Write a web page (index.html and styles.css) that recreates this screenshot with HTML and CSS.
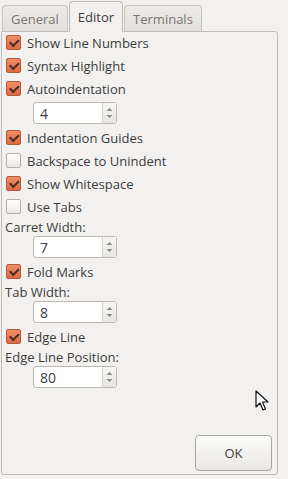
FILE: index.html
```html
<!DOCTYPE html>
<html lang="en">
<head>
    <meta charset="UTF-8">
    <title>Preferences</title>
    <link rel="stylesheet" href="styles.css">
</head>
<body>
<div class="window">
    <div class="tabs">
        <div class="tab">General</div>
        <div class="tab active">Editor</div>
        <div class="tab">Terminals</div>
    </div>
    <div class="panel">
        <div class="options">
            <label class="check on"><span class="box"></span>Show Line Numbers</label>
            <label class="check on"><span class="box"></span>Syntax Highlight</label>
            <label class="check on"><span class="box"></span>Autoindentation</label>
            <div class="spin first"><span class="value">4</span><span class="arrows"><svg width="7" height="14" viewBox="0 0 7 14"><path d="M0.5 5 L3.5 2 L6.5 5 Z M0.5 9 L3.5 12 L6.5 9 Z" fill="#8d8a85"/></svg></span></div>
            <label class="check on"><span class="box"></span>Indentation Guides</label>
            <label class="check"><span class="box"></span>Backspace to Unindent</label>
            <label class="check on"><span class="box"></span>Show Whitespace</label>
            <label class="check"><span class="box"></span>Use Tabs</label>
            <div class="label">Carret Width:</div>
            <div class="spin"><span class="value">7</span><span class="arrows"><svg width="7" height="14" viewBox="0 0 7 14"><path d="M0.5 5 L3.5 2 L6.5 5 Z M0.5 9 L3.5 12 L6.5 9 Z" fill="#8d8a85"/></svg></span></div>
            <label class="check on"><span class="box"></span>Fold Marks</label>
            <div class="label">Tab Width:</div>
            <div class="spin"><span class="value">8</span><span class="arrows"><svg width="7" height="14" viewBox="0 0 7 14"><path d="M0.5 5 L3.5 2 L6.5 5 Z M0.5 9 L3.5 12 L6.5 9 Z" fill="#8d8a85"/></svg></span></div>
            <label class="check on"><span class="box"></span>Edge Line</label>
            <div class="label">Edge Line Position:</div>
            <div class="spin"><span class="value">80</span><span class="arrows"><svg width="7" height="14" viewBox="0 0 7 14"><path d="M0.5 5 L3.5 2 L6.5 5 Z M0.5 9 L3.5 12 L6.5 9 Z" fill="#8d8a85"/></svg></span></div>
        </div>
        <div class="footer">
            <button class="ok">OK</button>
        </div>
    </div>
    <svg class="cursor" width="14" height="22" viewBox="0 0 14 22">
        <path d="M1 1 L1 17 L5 13 L8 20 L10.5 19 L7.5 12 L13 12 Z" fill="#fff" stroke="#111" stroke-width="1.2" stroke-linejoin="round"/>
    </svg>
</div>
</body>
</html>
```
FILE: styles.css
```css
body {
    margin: 0;
    background: #f2f1f0;
    font-family: "Open Sans", "DejaVu Sans", sans-serif;
    font-size: 13px;
    color: #3c3c3c;
}
.window {
    position: relative;
    width: 288px;
    height: 479px;
    display: flex;
    flex-direction: column;
}
.tabs {
    display: flex;
    align-items: flex-end;
    height: 31px;
    padding-left: 2px;
    gap: 1px;
}
.tab {
    height: 25px;
    padding: 0 8px;
    line-height: 26px;
    color: #7a7772;
    background: linear-gradient(#edebe8, #e2dfdb);
    border: 1px solid #c9c5c0;
    border-bottom: none;
    border-radius: 4px 4px 0 0;
}
.tab.active {
    height: 30px;
    line-height: 30px;
    color: #3c3c3c;
    background: #f2f1f0;
    border-color: #c0bcb6;
    position: relative;
    top: 1px;
    z-index: 1;
}
.panel {
    flex: 1;
    display: flex;
    flex-direction: column;
    margin: 0 10px 4px 1px;
    border: 1px solid #c0bcb6;
    border-radius: 0 3px 3px 3px;
}
.options {
    display: flex;
    flex-direction: column;
    margin-top: -1px;
    padding-left: 3px;
}
.check {
    display: flex;
    align-items: center;
    height: 23px;
    gap: 6px;
    flex-shrink: 0;
}
.box {
    width: 13px;
    height: 13px;
    margin-left: 1px;
    border: 1px solid #b3aea8;
    border-radius: 2px;
    background: linear-gradient(#ffffff, #ebe9e6);
    position: relative;
}
.check.on .box {
    border-color: #b4593a;
    background: linear-gradient(#ef8d68, #dd6a45);
}
.check.on .box::after {
    content: "";
    position: absolute;
    left: 2px;
    top: 7px;
    width: 7px;
    height: 4px;
    border-left: 2px solid #4a2c22;
    border-bottom: 2px solid #4a2c22;
    transform: rotate(-45deg);
    transform-origin: 0 0;
}
.label {
    height: 18px;
    line-height: 18px;
    flex-shrink: 0;
}
.spin {
    display: flex;
    flex-shrink: 0;
    width: 84px;
    height: 22px;
    margin: 0 0 2px 28px;
    border: 1px solid #bcb8b2;
    border-radius: 3px;
    background: #fff;
    box-sizing: border-box;
}
.spin.first {
    margin-top: 2px;
}
.value {
    flex: 1;
    padding-left: 6px;
    line-height: 21px;
    font-size: 14px;
}
.arrows {
    width: 13px;
    display: flex;
    align-items: center;
    justify-content: center;
    border-left: 1px solid #d6d3cf;
    background: linear-gradient(#f6f5f4, #e8e6e3);
}
.footer {
    margin-top: auto;
    display: flex;
    justify-content: flex-end;
    padding: 0 5px 3px 0;
}
.ok {
    width: 77px;
    height: 36px;
    border: 1px solid #aaa6a0;
    border-radius: 4px;
    background: linear-gradient(#fbfbfa, #eae8e5);
    font-family: "Open Sans", "DejaVu Sans", sans-serif;
    font-size: 13px;
    color: #3c3c3c;
}
.cursor {
    position: absolute;
    left: 255px;
    top: 390px;
}
```
